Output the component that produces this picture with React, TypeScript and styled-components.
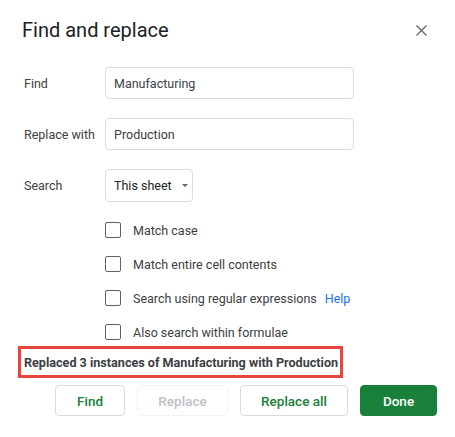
import React from 'react'
import styled, { createGlobalStyle } from 'styled-components'

const GlobalStyle = createGlobalStyle`
    * { box-sizing: border-box; }
    body {
        margin: 0;
        background: #ffffff;
        font-family: Roboto, "Liberation Sans", Arial, sans-serif;
        color: #3c4043;
    }
`

const options = [
    { label: 'Match case' },
    { label: 'Match entire cell contents' },
    { label: 'Search using regular expressions', help: true },
    { label: 'Also search within formulae' },
]

export default function App() {
    return (
        <>
            <GlobalStyle />
            <Dialog>
                <Header>
                    <Title>Find and replace</Title>
                    <CloseButton aria-label="Close">
                        <svg width="11" height="11" viewBox="0 0 11 11">
                            <path d="M0.5 0.5 L10.5 10.5 M10.5 0.5 L0.5 10.5" stroke="#5f6368" strokeWidth="1.3" />
                        </svg>
                    </CloseButton>
                </Header>

                <Form>
                    <Label>Find</Label>
                    <TextInput defaultValue="Manufacturing" />
                    <Label>Replace with</Label>
                    <TextInput defaultValue="Production" />
                    <Label>Search</Label>
                    <Select>
                        This sheet
                        <Caret />
                    </Select>
                </Form>

                <Options>
                    {options.map((o) => (
                        <OptionRow key={o.label}>
                            <Checkbox />
                            <OptionText>{o.label}</OptionText>
                            {o.help && <HelpLink href="#">Help</HelpLink>}
                        </OptionRow>
                    ))}
                </Options>

                <Status>Replaced 3 instances of Manufacturing with Production</Status>

                <Footer>
                    <Button width="70px">Find</Button>
                    <Button width="91px" disabled>Replace</Button>
                    <Button width="108px">Replace all</Button>
                    <Button width="77px" primary>Done</Button>
                </Footer>
            </Dialog>
        </>
    )
}

const Dialog = styled.div`
    width: 455px;
    height: 437px;
    background: #ffffff;
    padding: 0 18px 0 22px;
    display: flex;
    flex-direction: column;
`
const Header = styled.div`
    display: flex;
    align-items: center;
    justify-content: space-between;
    height: 62px;
    padding-bottom: 2px;
`
const Title = styled.h1`
    margin: 0;
    font-weight: 400;
    font-size: 20px;
    color: #202124;
    letter-spacing: 0;
`
const CloseButton = styled.button`
    border: none;
    background: none;
    padding: 0;
    margin-right: 10px;
    width: 11px;
    height: 11px;
    display: flex;
    cursor: pointer;
`
const Form = styled.div`
    display: grid;
    grid-template-columns: 83px 249px;
    row-gap: 19px;
    align-items: center;
    margin-top: 5px;
`
const Label = styled.label`
    font-size: 12.5px;
    color: #3c4043;
    padding-left: 2px;
`
const TextInput = styled.input`
    width: 249px;
    height: 32px;
    border: 1px solid #dadce0;
    border-radius: 4px;
    padding: 0 8px;
    font-family: Roboto, "Liberation Sans", Arial, sans-serif;
    font-size: 12.5px;
    color: #3c4043;
    outline: none;
`
const Select = styled.div`
    width: 88px;
    height: 33px;
    border: 1px solid #dadce0;
    border-radius: 4px;
    padding: 0 0 0 8px;
    display: flex;
    align-items: center;
    font-size: 12.5px;
    color: #202124;
`
const Caret = styled.span`
    margin-left: 10px;
    width: 0;
    height: 0;
    border-left: 3.5px solid transparent;
    border-right: 3.5px solid transparent;
    border-top: 3.5px solid #5f6368;
`
const Options = styled.div`
    display: flex;
    flex-direction: column;
    gap: 18px;
    margin-top: 20px;
    padding-left: 83px;
`
const OptionRow = styled.div`
    display: flex;
    align-items: center;
    height: 16px;
`
const Checkbox = styled.span`
    width: 16px;
    height: 16px;
    border: 1.5px solid #5f6368;
    border-radius: 2px;
    margin-right: 12px;
    flex-shrink: 0;
`
const OptionText = styled.span`
    font-size: 12.5px;
    color: #3c4043;
`
const HelpLink = styled.a`
    margin-left: 8px;
    font-size: 12.5px;
    color: #1a73e8;
    text-decoration: none;
`
const Status = styled.div`
    margin: 6px 0 0 -4px;
    width: 325px;
    height: 32px;
    border: 3px solid #e8453c;
    display: flex;
    align-items: center;
    padding-left: 3px;
    font-size: 12.6px;
    font-weight: 700;
    color: #3c4043;
    white-space: nowrap;
`
const Footer = styled.div`
    display: flex;
    justify-content: flex-end;
    gap: 12px;
    margin-top: 7px;
`
const Button = styled.button<{ width: string; primary?: boolean }>`
    width: ${(p) => p.width};
    height: 31px;
    border-radius: 4px;
    border: 1px solid ${(p) => (p.primary ? '#188038' : '#dadce0')};
    background: ${(p) => (p.primary ? '#188038' : '#ffffff')};
    color: ${(p) => (p.primary ? '#ffffff' : '#188038')};
    font-family: Roboto, "Liberation Sans", Arial, sans-serif;
    font-size: 13.5px;
    font-weight: 500;
    cursor: pointer;

    &:disabled {
        border-color: #f1f3f4;
        color: #bdc1c6;
        cursor: default;
    }
`
